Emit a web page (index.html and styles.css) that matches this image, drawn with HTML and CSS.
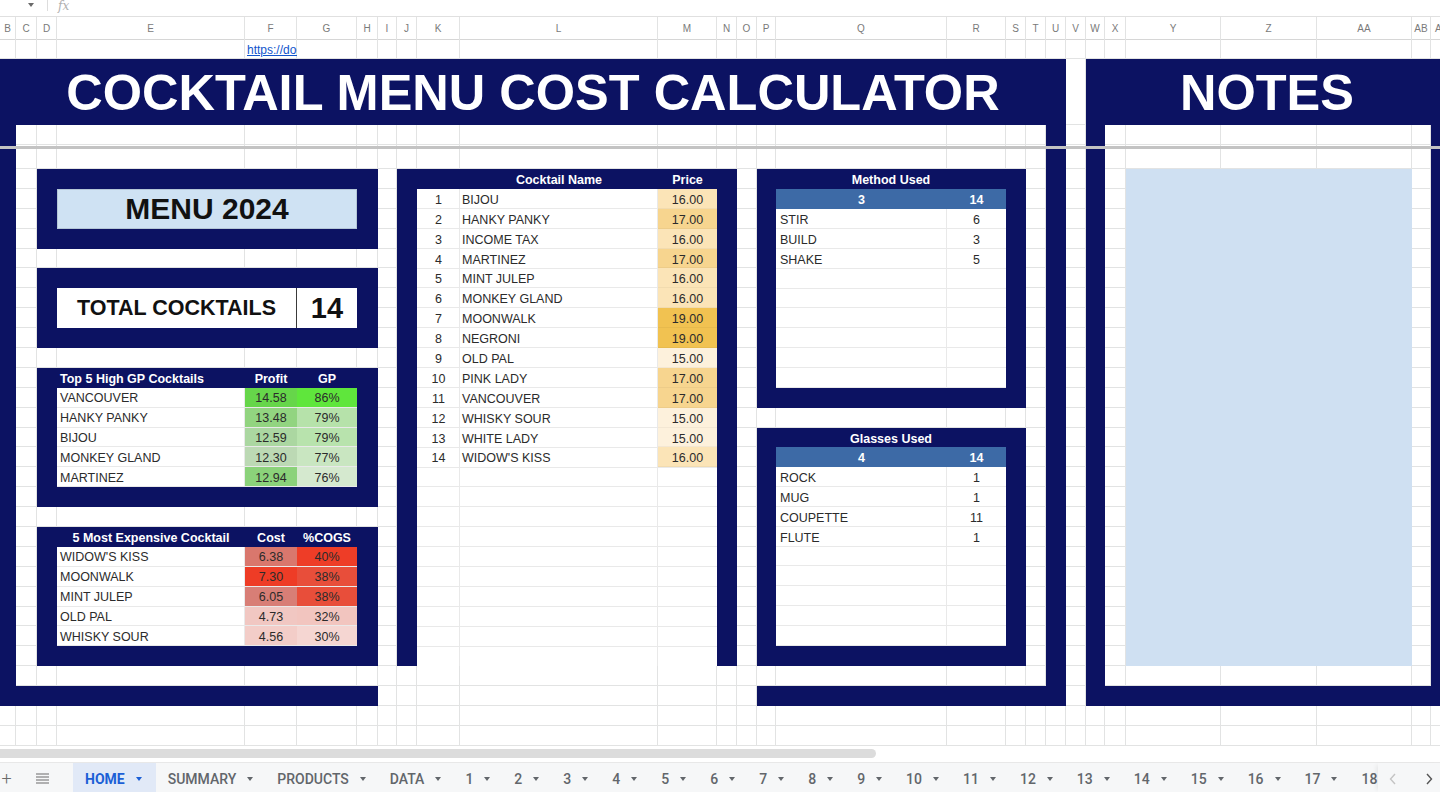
FILE: index.html
```html
<!DOCTYPE html>
<html lang="en">
<head>
<meta charset="utf-8">
<title>Cocktail Menu Cost Calculator</title>
<link rel="stylesheet" href="styles.css">
</head>
<body>
<div class="app">
  <div class="toolbar">
    <span class="tb-caret"></span>
    <span class="tb-sep"></span>
    <span class="fx">fx</span>
  </div>

  <div class="sheet">
    <div class="hlines">
      <div class="hrow hr-head"></div>
      <div class="hrow hr-1"></div>
      <div class="hrow hr-title"></div>
      <div class="hrow hr-20"></div>
      <div class="hrow hr-freeze"></div>
      <div class="hrow hr-20"></div>
      <div class="hrow"></div><div class="hrow"></div><div class="hrow"></div><div class="hrow"></div><div class="hrow"></div>
      <div class="hrow"></div><div class="hrow"></div><div class="hrow"></div><div class="hrow"></div><div class="hrow"></div>
      <div class="hrow"></div><div class="hrow"></div><div class="hrow"></div><div class="hrow"></div><div class="hrow"></div>
      <div class="hrow"></div><div class="hrow"></div><div class="hrow"></div><div class="hrow"></div><div class="hrow"></div>
      <div class="hrow"></div><div class="hrow"></div><div class="hrow"></div><div class="hrow"></div><div class="hrow"></div>
      <div class="hrow"></div><div class="hrow"></div><div class="hrow"></div><div class="hrow"></div>
    </div>

    <div class="vlines">
      <div class="col"><span class="ch">B</span></div>
      <div class="col"><span class="ch">C</span></div>
      <div class="col"><span class="ch">D</span></div>
      <div class="col"><span class="ch">E</span></div>
      <div class="col"><span class="ch">F</span></div>
      <div class="col"><span class="ch">G</span></div>
      <div class="col"><span class="ch">H</span></div>
      <div class="col"><span class="ch">I</span></div>
      <div class="col"><span class="ch">J</span></div>
      <div class="col"><span class="ch">K</span></div>
      <div class="col"><span class="ch">L</span></div>
      <div class="col"><span class="ch">M</span></div>
      <div class="col"><span class="ch">N</span></div>
      <div class="col"><span class="ch">O</span></div>
      <div class="col"><span class="ch">P</span></div>
      <div class="col"><span class="ch">Q</span></div>
      <div class="col"><span class="ch">R</span></div>
      <div class="col"><span class="ch">S</span></div>
      <div class="col"><span class="ch">T</span></div>
      <div class="col"><span class="ch">U</span></div>
      <div class="col"><span class="ch">V</span></div>
      <div class="col"><span class="ch">W</span></div>
      <div class="col"><span class="ch">X</span></div>
      <div class="col"><span class="ch">Y</span></div>
      <div class="col"><span class="ch">Z</span></div>
      <div class="col"><span class="ch">AA</span></div>
      <div class="col"><span class="ch">AB</span></div>
      <div class="col col-last"><span class="ch ch-left">AC</span></div>
    </div>

    <div class="content">
      <a class="link" href="#">https://docs.google.com</a>

      <div class="navy main-title">COCKTAIL MENU COST CALCULATOR</div>
      <div class="navy main-left"></div>
      <div class="navy main-right"></div>
      <div class="navy main-bottom-l"></div>
      <div class="navy main-bottom-r"></div>

      <div class="navy notes-title">NOTES</div>
      <div class="navy notes-left"></div>
      <div class="navy notes-right"></div>
      <div class="navy notes-bottom"></div>
      <div class="notes-box"></div>

      <div class="navy panel5 menu-panel">
        <div class="menu-box">MENU 2024</div>
      </div>

      <div class="navy panel5 total-panel">
        <div class="total-box">
          <div class="total-label">TOTAL COCKTAILS</div>
          <div class="total-num">14</div>
        </div>
      </div>

      <div class="navy list-panel gp-panel">
        <div class="th th-left">Top 5 High GP Cocktails</div><div class="th">Profit</div><div class="th">GP</div>
        <div class="td name">VANCOUVER</div><div class="td num" style="background:#66d64a">14.58</div><div class="td num" style="background:#5fe63c">86%</div>
        <div class="td name">HANKY PANKY</div><div class="td num" style="background:#92d480">13.48</div><div class="td num" style="background:#b6e2aa">79%</div>
        <div class="td name">BIJOU</div><div class="td num" style="background:#abd7a1">12.59</div><div class="td num" style="background:#b8e3ad">79%</div>
        <div class="td name">MONKEY GLAND</div><div class="td num" style="background:#bcd9b4">12.30</div><div class="td num" style="background:#c9e6c1">77%</div>
        <div class="td name">MARTINEZ</div><div class="td num" style="background:#8bd27a">12.94</div><div class="td num" style="background:#d5e9cf">76%</div>
      </div>

      <div class="navy list-panel cogs-panel">
        <div class="th">5 Most Expensive Cocktail</div><div class="th">Cost</div><div class="th">%COGS</div>
        <div class="td name">WIDOW'S KISS</div><div class="td num" style="background:#d9776d">6.38</div><div class="td num" style="background:#ee3d27">40%</div>
        <div class="td name">MOONWALK</div><div class="td num" style="background:#ee3c26">7.30</div><div class="td num" style="background:#e84e3a">38%</div>
        <div class="td name">MINT JULEP</div><div class="td num" style="background:#d87e76">6.05</div><div class="td num" style="background:#e84e3a">38%</div>
        <div class="td name">OLD PAL</div><div class="td num" style="background:#f1c7c2">4.73</div><div class="td num" style="background:#f2c5bf">32%</div>
        <div class="td name">WHISKY SOUR</div><div class="td num" style="background:#f3cdc8">4.56</div><div class="td num" style="background:#f5d6d2">30%</div>
      </div>

      <div class="navy cocktail-panel">
        <div class="ct-head">
          <div class="th"></div><div class="th">Cocktail Name</div><div class="th">Price</div>
        </div>
        <div class="ct-body">
          <div class="idx">1</div><div class="nm">BIJOU</div><div class="price" style="background:#fbe4b7">16.00</div>
          <div class="idx">2</div><div class="nm">HANKY PANKY</div><div class="price" style="background:#f7d58f">17.00</div>
          <div class="idx">3</div><div class="nm">INCOME TAX</div><div class="price" style="background:#fbe4b7">16.00</div>
          <div class="idx">4</div><div class="nm">MARTINEZ</div><div class="price" style="background:#f7d58f">17.00</div>
          <div class="idx">5</div><div class="nm">MINT JULEP</div><div class="price" style="background:#fbe4b7">16.00</div>
          <div class="idx">6</div><div class="nm">MONKEY GLAND</div><div class="price" style="background:#fbe4b7">16.00</div>
          <div class="idx">7</div><div class="nm">MOONWALK</div><div class="price" style="background:#f1c251">19.00</div>
          <div class="idx">8</div><div class="nm">NEGRONI</div><div class="price" style="background:#f1c251">19.00</div>
          <div class="idx">9</div><div class="nm">OLD PAL</div><div class="price" style="background:#fdf1dc">15.00</div>
          <div class="idx">10</div><div class="nm">PINK LADY</div><div class="price" style="background:#f7d58f">17.00</div>
          <div class="idx">11</div><div class="nm">VANCOUVER</div><div class="price" style="background:#f7d58f">17.00</div>
          <div class="idx">12</div><div class="nm">WHISKY SOUR</div><div class="price" style="background:#fdf1dc">15.00</div>
          <div class="idx">13</div><div class="nm">WHITE LADY</div><div class="price" style="background:#fdf1dc">15.00</div>
          <div class="idx">14</div><div class="nm">WIDOW'S KISS</div><div class="price" style="background:#fbe4b7">16.00</div>
        </div>
      </div>

      <div class="navy side-panel method-panel">
        <div class="sp-head">Method Used</div>
        <div class="sp-sub"><div>3</div><div>14</div></div>
        <div class="sp-body">
          <div class="sp-name">STIR</div><div class="sp-num">6</div>
          <div class="sp-name">BUILD</div><div class="sp-num">3</div>
          <div class="sp-name">SHAKE</div><div class="sp-num">5</div>
        </div>
      </div>

      <div class="navy side-panel glass-panel">
        <div class="sp-head">Glasses Used</div>
        <div class="sp-sub"><div>4</div><div>14</div></div>
        <div class="sp-body">
          <div class="sp-name">ROCK</div><div class="sp-num">1</div>
          <div class="sp-name">MUG</div><div class="sp-num">1</div>
          <div class="sp-name">COUPETTE</div><div class="sp-num">11</div>
          <div class="sp-name">FLUTE</div><div class="sp-num">1</div>
        </div>
      </div>

      <div class="freeze"></div>
    </div>
  </div>

  <div class="hscroll"><div class="thumb"></div></div>

  <div class="tabbar">
    <span class="tb-plus">+</span>
    <span class="tb-menu">
      <svg width="13" height="11" viewBox="0 0 13 11"><path d="M0 1h13M0 4h13M0 7h13M0 10h13" stroke="#6b6b6b" stroke-width="1.2" fill="none"/></svg>
    </span>
    <div class="tabs">
      <div class="tab active">HOME<span class="caret"></span></div>
      <div class="tab">SUMMARY<span class="caret"></span></div>
      <div class="tab">PRODUCTS<span class="caret"></span></div>
      <div class="tab">DATA<span class="caret"></span></div>
      <div class="tab">1<span class="caret"></span></div>
      <div class="tab">2<span class="caret"></span></div>
      <div class="tab">3<span class="caret"></span></div>
      <div class="tab">4<span class="caret"></span></div>
      <div class="tab">5<span class="caret"></span></div>
      <div class="tab">6<span class="caret"></span></div>
      <div class="tab">7<span class="caret"></span></div>
      <div class="tab">8<span class="caret"></span></div>
      <div class="tab">9<span class="caret"></span></div>
      <div class="tab">10<span class="caret"></span></div>
      <div class="tab">11<span class="caret"></span></div>
      <div class="tab">12<span class="caret"></span></div>
      <div class="tab">13<span class="caret"></span></div>
      <div class="tab">14<span class="caret"></span></div>
      <div class="tab">15<span class="caret"></span></div>
      <div class="tab">16<span class="caret"></span></div>
      <div class="tab">17<span class="caret"></span></div>
      <div class="tab">18<span class="caret"></span></div>
    </div>
    <div class="tab-nav">
      <svg width="8" height="12" viewBox="0 0 8 12"><path d="M6 1L1.5 6L6 11" stroke="#c4c4c4" stroke-width="1.4" fill="none"/></svg>
      <svg width="8" height="12" viewBox="0 0 8 12"><path d="M2 1L6.5 6L2 11" stroke="#555" stroke-width="1.4" fill="none"/></svg>
    </div>
  </div>
</div>
</body>
</html>
```

FILE: styles.css
```css
:root {
  --cols: 16px 21px 20px 188px 52px 60px 21px 19px 20px 43px 198px 59px 20px 20px 19px 171px 59px 20px 20px 20px 20px 19px 21px 95px 96px 95px 19px 9px;
  --rows: 23px 19px 66px 20px 4px 20px repeat(29, 19.9px);
  --navy: #0c1262;
  --grid: #e2e3e3;
  --cell-line: #e9e9e9;
  --row: 19.9px;
}

* { box-sizing: border-box; margin: 0; padding: 0; }

html, body {
  width: 1440px;
  height: 792px;
  overflow: hidden;
  background: #ffffff;
}

body {
  font-family: "Liberation Sans", Arial, sans-serif;
  color: #2b2b2b;
}

.app {
  display: flex;
  flex-direction: column;
  width: 1440px;
  height: 792px;
}

/* ---------- toolbar ---------- */
.toolbar {
  flex: none;
  height: 17px;
  display: flex;
  align-items: flex-start;
  border-bottom: 1px solid #e0e0e0;
  overflow: hidden;
}
.tb-caret {
  margin: 3px 0 0 28px;
  width: 0;
  height: 0;
  border-left: 3.5px solid transparent;
  border-right: 3.5px solid transparent;
  border-top: 4px solid #6a6a6a;
}
.tb-sep {
  margin-left: 13px;
  width: 1px;
  height: 11px;
  background: #dddddd;
}
.fx {
  margin-left: 10px;
  font: italic 12px "DejaVu Serif", serif;
  line-height: 12px;
  color: #b0b0b0;
}

/* ---------- sheet ---------- */
.sheet {
  flex: none;
  display: grid;
  height: 729.1px;
  overflow: hidden;
}
.sheet > * { grid-area: 1 / 1; }

.hlines {
  display: flex;
  flex-direction: column;
}
.hrow {
  flex: none;
  height: var(--row);
  border-bottom: 1px solid var(--grid);
}
.hr-head { height: 23px; border-bottom-color: #d6d6d6; }
.hr-1 { height: 19px; }
.hr-title { height: 66px; }
.hr-20 { height: 20px; }
.hr-freeze { height: 4px; border-bottom: none; }

.vlines {
  display: grid;
  grid-template-columns: var(--cols);
  grid-template-rows: 100%;
}
.col {
  border-right: 1px solid var(--grid);
  overflow: hidden;
}
.col-last { border-right: none; }
.ch {
  height: 23px;
  display: flex;
  align-items: center;
  justify-content: center;
  font-size: 10px;
  color: #7a7a7a;
}
.ch-left { justify-content: flex-start; padding-left: 4px; }

.content {
  display: grid;
  grid-template-columns: var(--cols);
  grid-template-rows: var(--rows);
}

.navy { background: var(--navy); }

.link {
  grid-column: 5 / 6;
  grid-row: 2 / 3;
  align-self: center;
  padding-left: 2px;
  font-size: 12px;
  color: #1155cc;
  text-decoration: underline;
  white-space: nowrap;
  overflow: hidden;
}

.main-title, .notes-title {
  grid-row: 3 / 4;
  display: flex;
  align-items: center;
  justify-content: center;
  color: #ffffff;
  font-weight: bold;
  font-size: 50.5px;
  white-space: nowrap;
}
.main-title { grid-column: 1 / 21; }
.notes-title { grid-column: 22 / 29; padding-left: 8px; }

.main-left { grid-column: 1 / 2; grid-row: 4 / 34; }
.main-right { grid-column: 20 / 21; grid-row: 4 / 34; }
.main-bottom-l { grid-column: 1 / 8; grid-row: 33 / 34; }
.main-bottom-r { grid-column: 15 / 21; grid-row: 33 / 34; }

.notes-left { grid-column: 22 / 23; grid-row: 4 / 34; }
.notes-right { grid-column: 28 / 29; grid-row: 4 / 34; }
.notes-bottom { grid-column: 22 / 29; grid-row: 33 / 34; }
.notes-box {
  grid-column: 24 / 27;
  grid-row: 7 / 32;
  background: #cfe0f2;
}

.freeze {
  grid-column: 1 / -1;
  grid-row: 5 / 6;
  background: #c3c3c3;
  margin: 0.5px 0;
}

/* ---------- left panels ---------- */
.panel5 {
  display: grid;
  grid-template-columns: 20px 188px 52px 60px 21px;
  grid-template-rows: repeat(4, 1fr);
}
.menu-panel { grid-column: 3 / 8; grid-row: 7 / 11; }
.total-panel { grid-column: 3 / 8; grid-row: 12 / 16; }

.menu-box {
  grid-column: 2 / 5;
  grid-row: 2 / 4;
  background: #cfe2f3;
  border: 1px solid #b4c6d6;
  display: flex;
  align-items: center;
  justify-content: center;
  font-weight: bold;
  font-size: 30px;
  color: #111111;
}

.total-box {
  grid-column: 2 / 5;
  grid-row: 2 / 4;
  background: #ffffff;
  display: flex;
  color: #111111;
  font-weight: bold;
}
.total-label {
  width: 240px;
  border-right: 1px solid #3a3a3a;
  display: flex;
  align-items: center;
  justify-content: center;
  font-size: 21.5px;
}
.total-num {
  flex: 1;
  display: flex;
  align-items: center;
  justify-content: center;
  font-size: 29px;
}

.list-panel {
  display: grid;
  grid-template-columns: 188px 52px 60px;
  grid-template-rows: repeat(7, 1fr);
  padding: 0 21px 0 20px;
  font-size: 12.5px;
}
.gp-panel { grid-column: 3 / 8; grid-row: 17 / 24; }
.cogs-panel { grid-column: 3 / 8; grid-row: 25 / 32; }

.th {
  display: flex;
  align-items: center;
  justify-content: center;
  padding-top: 2px;
  color: #ffffff;
  font-weight: bold;
  font-size: 12.5px;
  white-space: nowrap;
}
.th-left { justify-content: flex-start; padding-left: 3px; }

.td {
  display: flex;
  align-items: center;
  padding-top: 2px;
  background: #ffffff;
  border-bottom: 1px solid var(--cell-line);
  white-space: nowrap;
  overflow: hidden;
}
.td.name { padding-left: 3px; border-right: 1px solid var(--cell-line); }
.td.num { justify-content: center; }

/* ---------- cocktail list ---------- */
.cocktail-panel {
  grid-column: 9 / 14;
  grid-row: 7 / 32;
  display: flex;
  flex-direction: column;
  padding: 0 20px;
  font-size: 12.5px;
}
.ct-head {
  flex: none;
  height: var(--row);
  display: grid;
  grid-template-columns: 43px 198px 59px;
}
.ct-body {
  flex: 1;
  display: grid;
  grid-template-columns: 43px 198px 59px;
  grid-auto-rows: var(--row);
  align-content: start;
  background-color: #ffffff;
  background-image:
    repeating-linear-gradient(to bottom, transparent 0 18.9px, var(--cell-line) 18.9px 19.9px),
    linear-gradient(to right, transparent 0 42px, var(--cell-line) 42px 43px, transparent 43px 240px, var(--cell-line) 240px 241px, transparent 241px);
}
.idx, .nm, .price {
  display: flex;
  align-items: center;
  padding-top: 2px;
  white-space: nowrap;
}
.idx { justify-content: center; }
.nm { padding-left: 2px; }
.price {
  justify-content: center;
  box-shadow: inset 0 -1px 0 rgba(0, 0, 0, 0.04);
}

/* ---------- side panels ---------- */
.side-panel {
  display: flex;
  flex-direction: column;
  padding: 0 20px var(--row) 19px;
  font-size: 12.5px;
}
.method-panel { grid-column: 15 / 19; grid-row: 7 / 19; }
.glass-panel { grid-column: 15 / 19; grid-row: 20 / 32; }

.sp-head {
  flex: none;
  height: var(--row);
  display: flex;
  align-items: center;
  justify-content: center;
  padding-top: 2px;
  color: #ffffff;
  font-weight: bold;
}
.sp-sub {
  flex: none;
  height: var(--row);
  display: grid;
  grid-template-columns: 171px 59px;
  background: #3d6aa6;
  color: #ffffff;
  font-weight: bold;
}
.sp-sub > div {
  display: flex;
  align-items: center;
  justify-content: center;
  padding-top: 2px;
}
.sp-body {
  flex: 1;
  display: grid;
  grid-template-columns: 171px 59px;
  grid-auto-rows: var(--row);
  align-content: start;
  background-color: #ffffff;
  background-image:
    repeating-linear-gradient(to bottom, transparent 0 18.9px, var(--cell-line) 18.9px 19.9px),
    linear-gradient(to right, transparent 0 170px, var(--cell-line) 170px 171px, transparent 171px);
}
.sp-name, .sp-num {
  display: flex;
  align-items: center;
  padding-top: 2px;
}
.sp-name { padding-left: 4px; }
.sp-num { justify-content: center; }

/* ---------- horizontal scroll ---------- */
.hscroll {
  flex: none;
  height: 15.9px;
  padding-top: 3px;
}
.thumb {
  width: 876px;
  height: 9px;
  background: #dcdcdc;
  border-radius: 0 5px 5px 0;
}

/* ---------- tab bar ---------- */
.tabbar {
  flex: none;
  height: 30px;
  display: flex;
  align-items: stretch;
  background: #f6f7f8;
  border-top: 1px solid #e8e8e8;
  font-family: Roboto, "Liberation Sans", sans-serif;
  font-size: 14px;
  font-weight: 500;
  color: #62666b;
}
.tb-plus {
  width: 13px;
  display: flex;
  align-items: center;
  justify-content: center;
  padding-top: 3px;
  font-size: 18px;
  font-weight: 300;
  color: #6b6b6b;
}
.tb-menu {
  margin-left: 22px;
  width: 14px;
  display: flex;
  align-items: center;
  justify-content: center;
  padding-top: 3px;
}
.tabs {
  flex: 1;
  display: flex;
  margin-left: 24px;
  overflow: hidden;
}
.tab {
  flex: none;
  display: flex;
  align-items: center;
  gap: 11px;
  padding: 4px 12px 0;
  white-space: nowrap;
}
.tab.active {
  background: #e1e9f7;
  color: #1b5fd6;
  font-weight: 700;
  padding-right: 14px;
}
.caret {
  width: 0;
  height: 0;
  border-left: 3.5px solid transparent;
  border-right: 3.5px solid transparent;
  border-top: 4px solid currentColor;
}
.tab-nav {
  flex: none;
  width: 62px;
  display: flex;
  align-items: center;
  justify-content: space-between;
  padding: 4px 7px 0 11px;
  background: #f6f7f8;
  box-shadow: -4px 0 4px -2px rgba(0, 0, 0, 0.06);
}
```
